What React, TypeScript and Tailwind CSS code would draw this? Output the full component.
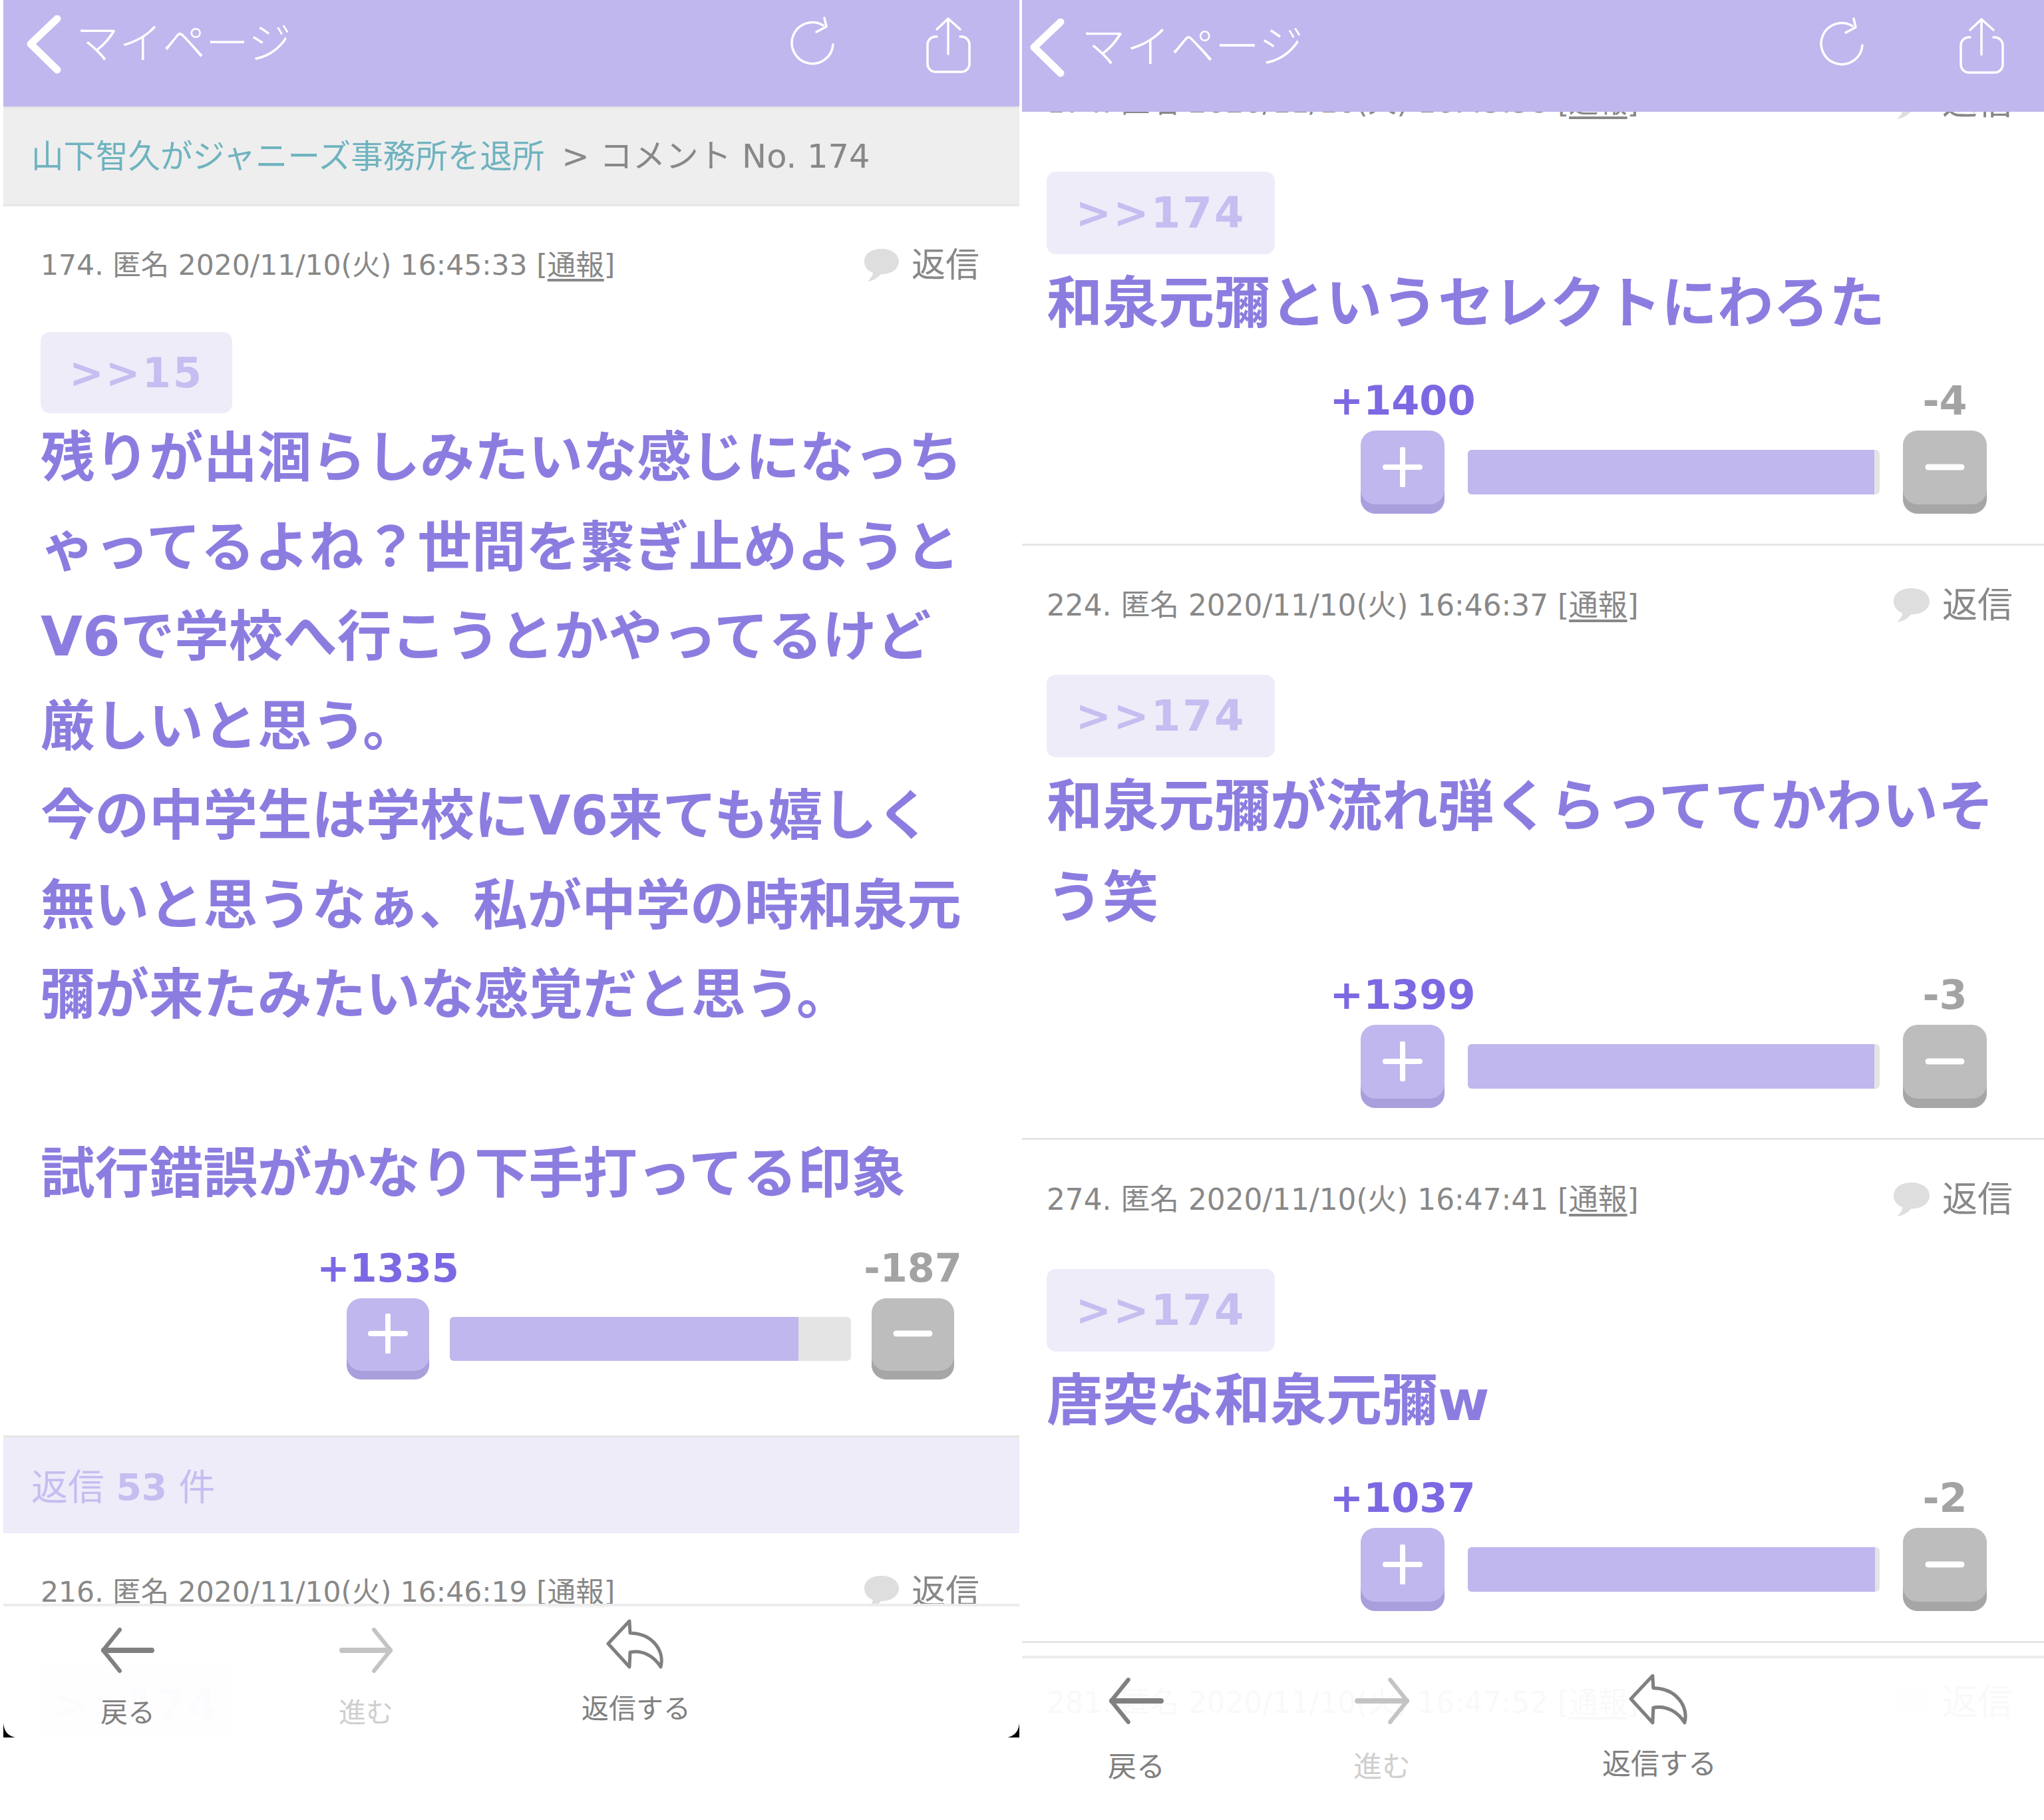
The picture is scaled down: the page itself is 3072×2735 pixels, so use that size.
const FONT = "font-['DejaVu_Sans','Noto_Sans_CJK_JP',sans-serif]";

type Sizes = typeof LEFT;

const LEFT = {
  post: "px-[56px] pt-[63px]",
  meta: "h-[52px] text-[42.5px] leading-[52px]",
  reply: "text-[51px] leading-[52px] mr-[4px]",
  bubble: "w-[54px] h-[52px] mr-[18px]",
  chip: "mt-[74px] h-[122px] w-[288px] text-[62px] rounded-[14px]",
  body: "text-[81.5px] leading-[134.5px]",
  vote: "mt-[41px] ml-[460px] w-[913px] grid-cols-[124px_1fr_124px] gap-x-[31px]",
  count: "h-[66px] text-[59px] leading-[66px] mb-[12px]",
  button: "h-[122px] rounded-[22px] pt-[23px] shadow-[inset_0_-13px_0_#a99fdc]",
  buttonGray: "h-[122px] rounded-[22px] pt-[23px] shadow-[inset_0_-13px_0_#a6a6a6]",
  bar: "h-[66px] mt-[28px]",
  end: "h-[84px]",
};

const RIGHT: Sizes = {
  post: "pl-[37px] pr-[47px] pt-[63px]",
  meta: "h-[54px] text-[43.8px] leading-[54px]",
  reply: "text-[53px] leading-[54px]",
  bubble: "w-[56px] h-[54px] mr-[18px]",
  chip: "mt-[77px] h-[124px] w-[343px] text-[64px] rounded-[14px]",
  body: "mt-[6px] text-[84px] leading-[137px]",
  vote: "mt-[43px] ml-[472px] w-[941px] grid-cols-[126px_1fr_126px] gap-x-[35px]",
  count: "h-[68px] text-[60.5px] leading-[68px] mb-[11px]",
  button: "h-[125px] rounded-[22px] pt-[25px] shadow-[inset_0_-14px_0_#a99fdc]",
  buttonGray: "h-[125px] rounded-[22px] pt-[25px] shadow-[inset_0_-14px_0_#a6a6a6]",
  bar: "h-[67px] mt-[29px]",
  end: "h-[48px] border-b-[3px] border-[#e6e6e6]",
};

function Bubble({ className }: { className: string }) {
  return (
    <svg viewBox="0 0 54 52" className={className}>
      <path d="M27 1C12 1 1 8 1 20c0 8 5 14 13 17-1 5-4 9-8 13 8-1 15-5 20-11h1c15 0 26-8 26-19S42 1 27 1z" fill="#dedede" />
    </svg>
  );
}

function MetaRow({ no, time, s }: { no: number; time: string; s: Sizes }) {
  return (
    <div className={`flex items-center justify-between text-[#888] ${s.meta}`}>
      <span className="whitespace-nowrap">
        {no}. 匿名 2020/11/10(火) {time} [<span className="underline underline-offset-[6px]">通報</span>]
      </span>
      <span className="flex items-center">
        <Bubble className={s.bubble} />
        <span className={s.reply}>返信</span>
      </span>
    </div>
  );
}

function Chip({ to, s }: { to: number; s: Sizes }) {
  return (
    <div className={`flex items-center justify-center bg-[#eeecf9] font-bold tracking-[3px] text-[#c5bef0] ${s.chip}`}>
      &gt;&gt;{to}
    </div>
  );
}

function VoteRow({ up, down, s }: { up: number; down: number; s: Sizes }) {
  const pct = (up / (up + down)) * 99;
  return (
    <div className={`grid ${s.vote}`}>
      <div className={`flex justify-center whitespace-nowrap font-bold text-[#7c68e2] ${s.count}`}>+{up}</div>
      <div />
      <div className={`flex justify-center whitespace-nowrap font-bold text-[#a3a3a3] ${s.count}`}>-{down}</div>
      <div className={`flex items-start justify-center bg-[#c0b7ee] ${s.button}`}>
        <svg viewBox="0 0 60 60" className="h-[60px] w-[60px]">
          <path d="M30 3v54" stroke="#fff" strokeWidth="8" strokeLinecap="round" />
          <path d="M4 30h52" stroke="#fff" strokeWidth="8" strokeLinecap="round" />
        </svg>
      </div>
      <div className={`overflow-hidden rounded-[6px] bg-[#e4e4e4] ${s.bar}`}>
        <div className="h-full bg-[#c0b7ee]" style={{ width: `${pct}%` }} />
      </div>
      <div className={`flex items-start justify-center bg-[#bdbdbd] ${s.buttonGray}`}>
        <svg viewBox="0 0 60 60" className="h-[60px] w-[60px]">
          <path d="M5 30h50" stroke="#fff" strokeWidth="9" strokeLinecap="round" />
        </svg>
      </div>
    </div>
  );
}

function Post({ no, time, to, lines, up, down, s }: { no: number; time: string; to: number; lines: string[]; up: number; down: number; s: Sizes }) {
  return (
    <div>
      <div className={s.post}>
        <MetaRow no={no} time={time} s={s} />
        <Chip to={to} s={s} />
        <div className={`font-bold text-[#8b7de0] ${s.body}`}>
          {lines.map((l, i) => (
            <div key={i} className="min-h-[1lh] whitespace-nowrap">{l}</div>
          ))}
        </div>
        <VoteRow up={up} down={down} s={s} />
      </div>
      <div className={s.end} />
    </div>
  );
}

function TopBar({ className, chevron, iconGap, title }: { className: string; chevron: string; iconGap: string; title: string }) {
  return (
    <div className={`flex items-start bg-[#c0b7ee] text-white ${className}`}>
      <svg viewBox="0 0 52 88" className={chevron} fill="none">
        <path d="M46 5 6 43l40 39" stroke="#fff" strokeWidth="11" strokeLinecap="round" strokeLinejoin="round" />
      </svg>
      <span className={`font-light ${title}`}>マイページ</span>
      <div className={`ml-auto flex items-start ${iconGap}`}>
        <svg viewBox="0 0 70 76" className="h-[76px] w-[70px]" fill="none" stroke="#fff" strokeWidth="3.5" strokeLinecap="round" strokeLinejoin="round">
          <path d="M65 42A31 31 0 1 1 50 13" />
          <path d="M52 2l3 13-15 8" />
        </svg>
        <svg viewBox="0 0 70 86" className="h-[86px] w-[70px]" fill="none" stroke="#fff" strokeWidth="3.5" strokeLinecap="round" strokeLinejoin="round">
          <path d="M34 56V3M17 19 34 3l18 16" />
          <path d="M17 30h-2A12 12 0 0 0 3 42v29a12 12 0 0 0 12 12h39a12 12 0 0 0 12-12V42a12 12 0 0 0-12-12h-2" />
        </svg>
      </div>
    </div>
  );
}

function NavArrow({ dir, color, className }: { dir: "back" | "forward"; color: string; className: string }) {
  return (
    <svg viewBox="0 0 84 70" className={className} fill="none" stroke={color} strokeLinecap="round" strokeLinejoin="round">
      {dir === "back" ? (
        <>
          <path d="M30 4 5 35l25 31" strokeWidth="6" />
          <path d="M6 35h72" strokeWidth="8" />
        </>
      ) : (
        <>
          <path d="M54 4l25 31-25 31" strokeWidth="6" />
          <path d="M6 35h72" strokeWidth="8" />
        </>
      )}
    </svg>
  );
}

function ReplyIcon({ className }: { className: string }) {
  return (
    <svg viewBox="0 0 90 76" className={className} fill="none" stroke="#808080" strokeWidth="5" strokeLinecap="round" strokeLinejoin="round">
      <path d="M35 3 3 37l32 35 1-22c19-4 36 6 46 22 6-22-10-50-46-51z" />
    </svg>
  );
}

function BottomBar({ className, cols, backPad, replyPad, label, replyLabel, arrow, reply }: { className: string; cols: string; backPad: string; replyPad: string; label: string; replyLabel: string; arrow: string; reply: string }) {
  return (
    <div className={`absolute inset-x-0 z-10 grid border-t-[4px] border-[#ececec] bg-white/95 ${cols} ${className}`}>
      <div className={`flex flex-col items-center ${backPad}`}>
        <NavArrow dir="back" color="#808080" className={arrow} />
        <span className={`text-[#808080] ${label}`}>戻る</span>
      </div>
      <div className={`flex flex-col items-center ${backPad}`}>
        <NavArrow dir="forward" color="#c4c4c4" className={arrow} />
        <span className={`text-[#cfcfcf] ${label}`}>進む</span>
      </div>
      <div className={`flex flex-col items-center ${replyPad}`}>
        <ReplyIcon className={reply} />
        <span className={`text-[#808080] ${replyLabel}`}>返信する</span>
      </div>
    </div>
  );
}

export default function App() {
  return (
    <div className={`grid h-[2735px] w-[3072px] grid-cols-[1527px_1536px] gap-x-[4px] overflow-hidden bg-white pl-[5px] ${FONT}`}>
      {/* left screen */}
      <div className="relative h-[2611px] overflow-hidden bg-white">
        <TopBar
          className="h-[160px] pl-[35px] pr-[71px] pt-[23px] text-[65px] leading-[76px]"
          chevron="h-[88px] w-[52px]"
          title="ml-[22px] mt-[5px]"
          iconGap="gap-x-[134px] mt-[2px]"
        />
        <div className="flex h-[150px] items-center border-y-[3px] border-[#e6e6e6] bg-[#eeeeee] px-[42px] text-[48.5px] whitespace-nowrap text-[#888]">
          <span className="text-[#6fb3bf]">山下智久がジャニーズ事務所を退所</span>
          <span className="ml-[26px] text-[49.5px]">&gt; コメント No. 174</span>
        </div>
        <Post
          no={174}
          time="16:45:33"
          to={15}
          s={LEFT}
          up={1335}
          down={187}
          lines={[
            "残りが出涸らしみたいな感じになっち",
            "ゃってるよね？世間を繋ぎ止めようと",
            "V6で学校へ行こうとかやってるけど",
            "厳しいと思う。",
            "今の中学生は学校にV6来ても嬉しく",
            "無いと思うなぁ、私が中学の時和泉元",
            "彌が来たみたいな感覚だと思う。",
            "",
            "試行錯誤がかなり下手打ってる印象",
          ]}
        />
        <div className="flex h-[147px] items-center border-t-[3px] border-[#e6e6e6] bg-[#eeecf9] px-[42px] pt-[8px] text-[55px] text-[#c5bef0]">
          返信&nbsp;<b>53</b>&nbsp;件
        </div>
        <div className={LEFT.post}>
          <MetaRow no={216} time="16:46:19" s={LEFT} />
          <div className="pt-[8px]">
            <Chip to={174} s={LEFT} />
          </div>
        </div>
        <BottomBar
          className="bottom-0 h-[201px]"
          cols="grid-cols-[374px_342px_470px]"
          backPad="pt-[31px]"
          replyPad="pt-[19px]"
          label="mt-[33px] text-[41px] leading-[52px]"
          replyLabel="mt-[33px] text-[41px] leading-[52px]"
          arrow="h-[70px] w-[84px]"
          reply="h-[76px] w-[90px]"
        />
        <svg viewBox="0 0 18 22" className="absolute bottom-0 left-0 z-20 h-[22px] w-[18px]">
          <path d="M0 0c1 12 6 19 18 22H0z" fill="#000" />
        </svg>
        <svg viewBox="0 0 18 22" className="absolute bottom-0 right-0 z-20 h-[22px] w-[18px]">
          <path d="M18 0C17 12 12 19 0 22h18z" fill="#000" />
        </svg>
      </div>

      {/* right screen */}
      <div className="relative h-[2735px] overflow-hidden bg-white">
        <TopBar
          className="absolute inset-x-0 top-0 z-10 h-[168px] pl-[12px] pr-[58px] pt-[28px] text-[67px] leading-[78px]"
          chevron="h-[88px] w-[52px]"
          title="ml-[25px] mt-[4px]"
          iconGap="gap-x-[140px] -mt-[2px]"
        />
        <div className="pt-[64px]">
          <Post no={174} time="16:45:58" to={174} s={RIGHT} up={1400} down={4} lines={["和泉元彌というセレクトにわろた"]} />
          <Post no={224} time="16:46:37" to={174} s={RIGHT} up={1399} down={3} lines={["和泉元彌が流れ弾くらっててかわいそ", "う笑"]} />
          <Post no={274} time="16:47:41" to={174} s={RIGHT} up={1037} down={2} lines={["唐突な和泉元彌w"]} />
          <div className={RIGHT.post}>
            <MetaRow no={281} time="16:47:52" s={RIGHT} />
          </div>
        </div>
        <BottomBar
          className="top-[2488px] h-[247px]"
          cols="grid-cols-[344px_394px_440px]"
          backPad="pt-[28px]"
          replyPad="pt-[22px]"
          label="mt-[36px] text-[43px] leading-[54px]"
          replyLabel="mt-[30px] text-[43px] leading-[54px]"
          arrow="h-[72px] w-[86px]"
          reply="h-[80px] w-[92px]"
        />
      </div>
    </div>
  );
}
